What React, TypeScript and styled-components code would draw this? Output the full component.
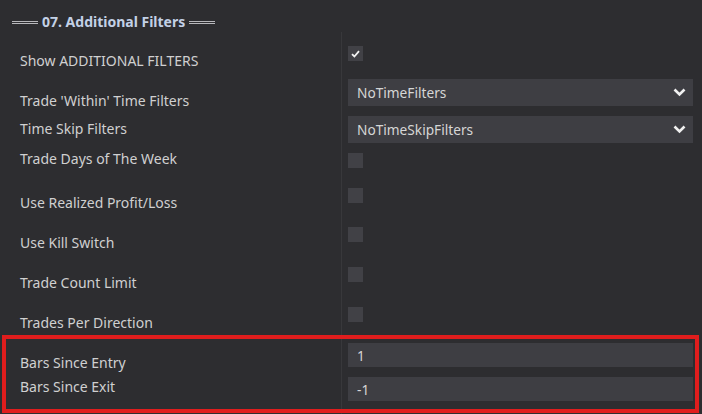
import React from 'react';
import styled, { createGlobalStyle } from 'styled-components';

const GlobalStyle = createGlobalStyle`
  html, body {
    margin: 0;
    padding: 0;
    background: #2d2d30;
  }
  body {
    font-family: "Noto Sans", "Open Sans", sans-serif;
  }
`;

const Panel = styled.div`
  width: 702px;
  height: 414px;
  background: #2d2d30;
  color: #d2d2d2;
  overflow: hidden;
  display: flex;
  flex-direction: column;
`;

const Header = styled.div`
  height: 32px;
  box-sizing: border-box;
  padding: 12px 0 0 12px;
  display: flex;
  align-items: center;
  gap: 4px;
  align-self: flex-start;
  line-height: 20px;
`;

const DoubleRule = styled.span`
  display: block;
  width: 26px;
  height: 1px;
  border-top: 1px solid #b8b8bc;
  border-bottom: 1px solid #b8b8bc;
  margin-top: 1px;
`;

const Title = styled.span`
  font-size: 14px;
  font-weight: 700;
  color: #c3d1e6;
  margin-top: -1px;
`;

const Body = styled.div`
  display: flex;
  flex-direction: column;
`;

const Row = styled.div<{ $h: number }>`
  display: grid;
  grid-template-columns: 341px 1fr;
  height: ${p => p.$h}px;
`;

const Label = styled.div<{ $top: number }>`
  padding: ${p => p.$top}px 0 0 20px;
  font-size: 14px;
  line-height: 20px;
  color: #d0d0d0;
  white-space: nowrap;
`;

const Cell = styled.div<{ $top: number }>`
  border-left: 1px solid #38383b;
  padding: ${p => p.$top}px 9px 0 6px;
`;

const CheckBox = styled.div`
  width: 15px;
  height: 15px;
  background: #414146;
  display: flex;
  align-items: center;
  justify-content: center;
`;

const Select = styled.div`
  height: 27px;
  background: #3e3e43;
  display: flex;
  align-items: center;
  justify-content: space-between;
  padding: 0 7px 0 9px;
  font-size: 13.7px;
  color: #d6d6d6;
`;

const NumberBox = styled.div`
  height: 24px;
  background: #3e3e43;
  display: flex;
  align-items: center;
  padding: 0 9px;
  font-size: 13.7px;
  color: #d6d6d6;
`;

const Highlight = styled.div`
  position: relative;
  &::after {
    content: '';
    position: absolute;
    left: 2px;
    right: 3px;
    top: -2px;
    bottom: 1px;
    border: 4px solid #e01d1d;
    pointer-events: none;
  }
`;

const Check = () => (
  <svg width="9" height="8" viewBox="0 0 9 8">
    <path d="M1 4.2 L3.4 6.5 L8 1.2" fill="none" stroke="#f2f2f2" strokeWidth="1.8" />
  </svg>
);

const Chevron = () => (
  <svg width="13" height="9" viewBox="0 0 13 9">
    <path d="M1.5 1.5 L6.5 6.5 L11.5 1.5" fill="none" stroke="#f0f0f0" strokeWidth="2.6" />
  </svg>
);

type Kind = 'check' | 'checked' | 'select' | 'number';

interface Item {
  label: string;
  kind: Kind;
  value?: string;
  h: number;
  labelTop: number;
  ctrlTop: number;
}

const items: Item[] = [
  { label: 'Show ADDITIONAL FILTERS', kind: 'checked', h: 41, labelTop: 19, ctrlTop: 14 },
  { label: "Trade 'Within' Time Filters", kind: 'select', value: 'NoTimeFilters', h: 37, labelTop: 18, ctrlTop: 6 },
  { label: 'Time Skip Filters', kind: 'select', value: 'NoTimeSkipFilters', h: 37, labelTop: 9, ctrlTop: 6 },
  { label: 'Trade Days of The Week', kind: 'check', h: 35, labelTop: 2, ctrlTop: 6 },
  { label: 'Use Realized Profit/Loss', kind: 'check', h: 39, labelTop: 11, ctrlTop: 6 },
  { label: 'Use Kill Switch', kind: 'check', h: 40, labelTop: 12, ctrlTop: 6 },
  { label: 'Trade Count Limit', kind: 'check', h: 40, labelTop: 12, ctrlTop: 6 },
  { label: 'Trades Per Direction', kind: 'check', h: 36, labelTop: 12, ctrlTop: 6 },
];

const highlighted: Item[] = [
  { label: 'Bars Since Entry', kind: 'number', value: '1', h: 34, labelTop: 16, ctrlTop: 6 },
  { label: 'Bars Since Exit', kind: 'number', value: '-1', h: 43, labelTop: 6, ctrlTop: 6 },
];

const Control: React.FC<{ item: Item }> = ({ item }) => {
  switch (item.kind) {
    case 'checked':
      return <CheckBox><Check /></CheckBox>;
    case 'check':
      return <CheckBox />;
    case 'select':
      return (
        <Select>
          <span>{item.value}</span>
          <Chevron />
        </Select>
      );
    case 'number':
      return <NumberBox>{item.value}</NumberBox>;
  }
};

const PropertyRow: React.FC<{ item: Item }> = ({ item }) => (
  <Row $h={item.h}>
    <Label $top={item.labelTop}>{item.label}</Label>
    <Cell $top={item.ctrlTop}>
      <Control item={item} />
    </Cell>
  </Row>
);

const App: React.FC = () => (
  <>
    <GlobalStyle />
    <Panel>
      <Header>
        <DoubleRule />
        <Title>07. Additional Filters</Title>
        <DoubleRule />
      </Header>
      <Body>
        {items.map(item => (
          <PropertyRow key={item.label} item={item} />
        ))}
        <Highlight>
          {highlighted.map(item => (
            <PropertyRow key={item.label} item={item} />
          ))}
        </Highlight>
      </Body>
    </Panel>
  </>
);

export default App;
